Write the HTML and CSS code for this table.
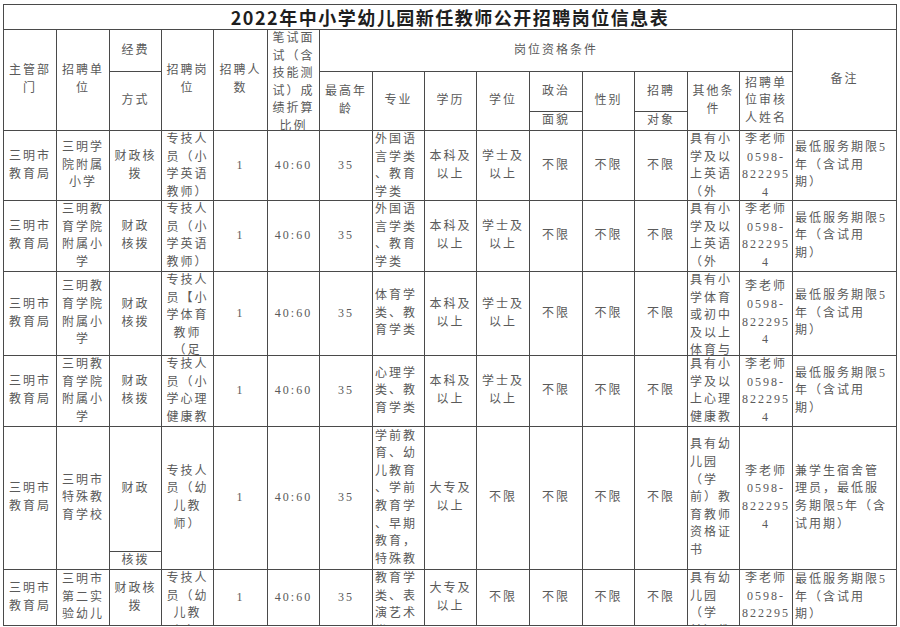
FILE: index.html
```html
<!DOCTYPE html>
<html lang="zh-CN">
<head>
<meta charset="utf-8">
<title>2022年中小学幼儿园新任教师公开招聘岗位信息表</title>
<link rel="stylesheet" href="styles.css">
</head>
<body>
<div class="sheet">
  <div class="title">2022年中小学幼儿园新任教师公开招聘岗位信息表</div>

  <div class="c rs3"><div>主管部<br>门</div></div>
  <div class="c rs3"><div>招聘单<br>位</div></div>
  <div class="c"><div>经费</div></div>
  <div class="c rs3"><div>招聘岗<br>位</div></div>
  <div class="c rs3"><div>招聘人<br>数</div></div>
  <div class="c rs3"><div>笔试面<br>试（含<br>技能测<br>试）成<br>绩折算<br>比例</div></div>
  <div class="c cs9"><div>岗位资格条件</div></div>
  <div class="c rs3"><div>备注</div></div>
  <div class="c rs2"><div>方式</div></div>
  <div class="c rs2"><div>最高年<br>龄</div></div>
  <div class="c rs2"><div>专业</div></div>
  <div class="c rs2"><div>学历</div></div>
  <div class="c rs2"><div>学位</div></div>
  <div class="c"><div>政治</div></div>
  <div class="c rs2"><div>性别</div></div>
  <div class="c"><div>招聘</div></div>
  <div class="c rs2"><div>其他条<br>件</div></div>
  <div class="c rs2"><div>招聘单<br>位审核<br>人姓名</div></div>
  <div class="c"><div>面貌</div></div>
  <div class="c"><div>对象</div></div>

  <!-- row 1 -->
  <div class="c"><div>三明市<br>教育局</div></div>
  <div class="c"><div>三明学<br>院附属<br>小学</div></div>
  <div class="c"><div>财政核<br>拨</div></div>
  <div class="c"><div>专技人<br>员（小<br>学英语<br>教师）</div></div>
  <div class="c"><div>1</div></div>
  <div class="c"><div>40:60</div></div>
  <div class="c"><div>35</div></div>
  <div class="c l"><div>外国语<br>言学类<br>、教育<br>学类</div></div>
  <div class="c"><div>本科及<br>以上</div></div>
  <div class="c"><div>学士及<br>以上</div></div>
  <div class="c"><div>不限</div></div>
  <div class="c"><div>不限</div></div>
  <div class="c"><div>不限</div></div>
  <div class="c l"><div>具有小<br>学及以<br>上英语<br>（外</div></div>
  <div class="c"><div>李老师<br>0598-<br>822295<br>4</div></div>
  <div class="c l"><div>最低服务期限5<br>年（含试用<br>期）</div></div>

  <!-- row 2 -->
  <div class="c"><div>三明市<br>教育局</div></div>
  <div class="c"><div>三明教<br>育学院<br>附属小<br>学</div></div>
  <div class="c"><div>财政<br>核拨</div></div>
  <div class="c"><div>专技人<br>员（小<br>学英语<br>教师）</div></div>
  <div class="c"><div>1</div></div>
  <div class="c"><div>40:60</div></div>
  <div class="c"><div>35</div></div>
  <div class="c l"><div>外国语<br>言学类<br>、教育<br>学类</div></div>
  <div class="c"><div>本科及<br>以上</div></div>
  <div class="c"><div>学士及<br>以上</div></div>
  <div class="c"><div>不限</div></div>
  <div class="c"><div>不限</div></div>
  <div class="c"><div>不限</div></div>
  <div class="c l"><div>具有小<br>学及以<br>上英语<br>（外</div></div>
  <div class="c"><div>李老师<br>0598-<br>822295<br>4</div></div>
  <div class="c l"><div>最低服务期限5<br>年（含试用<br>期）</div></div>

  <!-- row 3 -->
  <div class="c"><div>三明市<br>教育局</div></div>
  <div class="c"><div>三明教<br>育学院<br>附属小<br>学</div></div>
  <div class="c"><div>财政<br>核拨</div></div>
  <div class="c"><div>专技人<br>员【小<br>学体育<br>教师<br>（足</div></div>
  <div class="c"><div>1</div></div>
  <div class="c"><div>40:60</div></div>
  <div class="c"><div>35</div></div>
  <div class="c l"><div>体育学<br>类、教<br>育学类</div></div>
  <div class="c"><div>本科及<br>以上</div></div>
  <div class="c"><div>学士及<br>以上</div></div>
  <div class="c"><div>不限</div></div>
  <div class="c"><div>不限</div></div>
  <div class="c"><div>不限</div></div>
  <div class="c l"><div>具有小<br>学体育<br>或初中<br>及以上<br>体育与</div></div>
  <div class="c"><div>李老师<br>0598-<br>822295<br>4</div></div>
  <div class="c l"><div>最低服务期限5<br>年（含试用<br>期）</div></div>

  <!-- row 4 -->
  <div class="c"><div>三明市<br>教育局</div></div>
  <div class="c"><div>三明教<br>育学院<br>附属小<br>学</div></div>
  <div class="c"><div>财政<br>核拨</div></div>
  <div class="c"><div>专技人<br>员（小<br>学心理<br>健康教</div></div>
  <div class="c"><div>1</div></div>
  <div class="c"><div>40:60</div></div>
  <div class="c"><div>35</div></div>
  <div class="c l"><div>心理学<br>类、教<br>育学类</div></div>
  <div class="c"><div>本科及<br>以上</div></div>
  <div class="c"><div>学士及<br>以上</div></div>
  <div class="c"><div>不限</div></div>
  <div class="c"><div>不限</div></div>
  <div class="c"><div>不限</div></div>
  <div class="c l"><div>具有小<br>学及以<br>上心理<br>健康教</div></div>
  <div class="c"><div>李老师<br>0598-<br>822295<br>4</div></div>
  <div class="c l"><div>最低服务期限5<br>年（含试用<br>期）</div></div>

  <!-- row 5 -->
  <div class="c rs2"><div>三明市<br>教育局</div></div>
  <div class="c rs2"><div>三明市<br>特殊教<br>育学校</div></div>
  <div class="c"><div>财政</div></div>
  <div class="c rs2"><div>专技人<br>员（幼<br>儿教<br>师）</div></div>
  <div class="c rs2"><div>1</div></div>
  <div class="c rs2"><div>40:60</div></div>
  <div class="c rs2"><div>35</div></div>
  <div class="c rs2 l"><div>学前教<br>育、幼<br>儿教育<br>、学前<br>教育学<br>、早期<br>教育，<br>特殊教</div></div>
  <div class="c rs2"><div>大专及<br>以上</div></div>
  <div class="c rs2"><div>不限</div></div>
  <div class="c rs2"><div>不限</div></div>
  <div class="c rs2"><div>不限</div></div>
  <div class="c rs2"><div>不限</div></div>
  <div class="c rs2 l"><div>具有幼<br>儿园<br>（学<br>前）教<br>育教师<br>资格证<br>书</div></div>
  <div class="c rs2"><div>李老师<br>0598-<br>822295<br>4</div></div>
  <div class="c rs2 l"><div>兼学生宿舍管<br>理员，最低服<br>务期限5年（含<br>试用期）</div></div>
  <div class="c"><div>核拨</div></div>

  <!-- row 6 -->
  <div class="c"><div>三明市<br>教育局</div></div>
  <div class="c"><div>三明市<br>第二实<br>验幼儿</div></div>
  <div class="c"><div>财政核<br>拨</div></div>
  <div class="c"><div>专技人<br>员（幼<br>儿教<br>师）</div></div>
  <div class="c"><div>1</div></div>
  <div class="c"><div>40:60</div></div>
  <div class="c"><div>35</div></div>
  <div class="c l"><div>教育学<br>类、表<br>演艺术<br>类</div></div>
  <div class="c"><div>大专及<br>以上</div></div>
  <div class="c"><div>不限</div></div>
  <div class="c"><div>不限</div></div>
  <div class="c"><div>不限</div></div>
  <div class="c"><div>不限</div></div>
  <div class="c l"><div>具有幼<br>儿园<br>（学<br>前）教</div></div>
  <div class="c"><div>李老师<br>0598-<br>822295<br>4</div></div>
  <div class="c l"><div>最低服务期限5<br>年（含试用<br>期）</div></div>
</div>
</body>
</html>
```

FILE: styles.css
```css
* {
  box-sizing: border-box;
}

html,
body {
  margin: 0;
  background: #ffffff;
}

body {
  overflow: hidden;
}

.sheet {
  display: grid;
  grid-template-columns: 52px 52px 51px 51px 53px 51px 52px 51px 51px 52px 52px 51px 52px 51px 52px 103px;
  grid-template-rows: 24px 41px 39px 18px 69px 70px 83px 70px 124px 17px 55px;
  gap: 1px;
  padding: 1px;
  width: max-content;
  margin: 4px 0 0 3px;
  background: #4a4a4a;
  font-family: "Liberation Serif", "Noto Sans CJK SC", serif;
  font-size: 12px;
  letter-spacing: 2px;
  line-height: 17.6px;
  color: #5a5a5a;
}

.title {
  grid-column: 1 / -1;
  grid-row: 1;
  background: #ffffff;
  font-family: "Noto Sans CJK SC", sans-serif;
  font-weight: 700;
  font-size: 18px;
  letter-spacing: 1.5px;
  line-height: 24px;
  color: #1e1e1e;
  text-align: center;
}

.c {
  background: #ffffff;
  display: flex;
  flex-direction: column;
  overflow: hidden;
  text-align: center;
  white-space: nowrap;
}

.c > div {
  margin: auto 0;
}

.l {
  text-align: left;
  padding-left: 2px;
}

.rs2 {
  grid-row: span 2;
}

.rs3 {
  grid-row: span 3;
}

.cs9 {
  grid-column: span 9;
}
```
